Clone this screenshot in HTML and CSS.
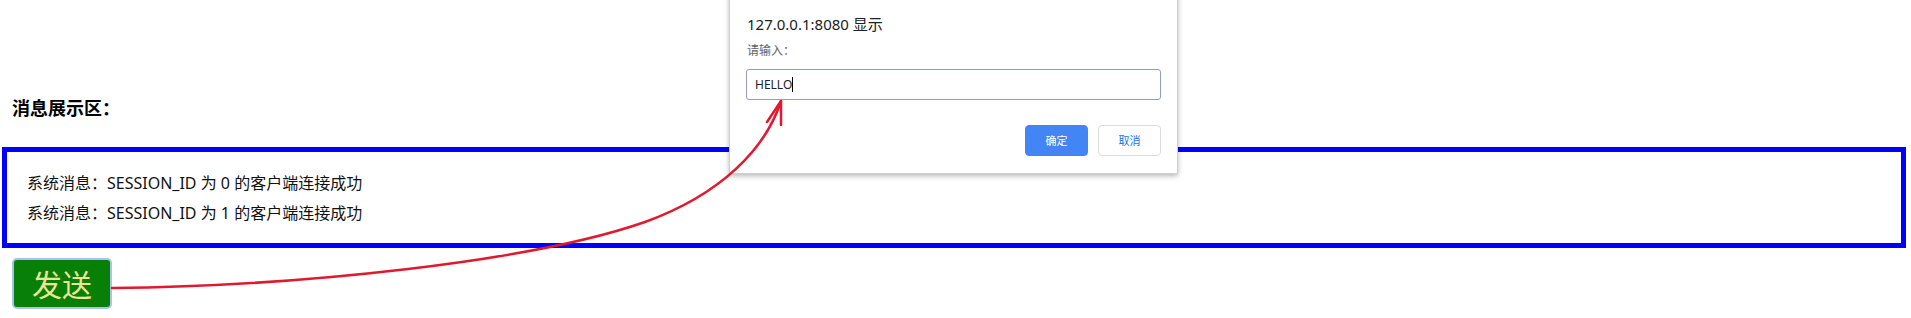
FILE: index.html
```html
<!DOCTYPE html>
<html lang="zh-CN">
<head>
    <meta charset="UTF-8">
    <title>WebSocket 聊天</title>
    <link rel="stylesheet" href="styles.css">
</head>
<body>
    <div class="page">
        <h3 class="title">消息展示区：</h3>

        <!-- zone des messages -->
        <div class="msg-box" id="msg-box">
            <div class="msg">系统消息：SESSION_ID 为 0 的客户端连接成功</div>
            <div class="msg">系统消息：SESSION_ID 为 1 的客户端连接成功</div>
        </div>

        <button class="send-btn" id="send-btn">发送</button>
    </div>

    <!-- boîte de dialogue prompt() -->
    <div class="dialog">
        <div class="dialog-title">127.0.0.1:8080 显示</div>
        <div class="dialog-label">请输入：</div>
        <div class="dialog-input">HELLO<span class="caret"></span></div>
        <div class="dialog-actions">
            <span class="btn btn-ok">确定</span>
            <span class="btn btn-cancel">取消</span>
        </div>
    </div>

    <!-- flèche rouge d'annotation -->
    <svg class="annotation" width="1911" height="318" viewBox="0 0 1911 318">
        <path d="M112 288 C300 286 530 262 645 222 C722 194 766 148 781 101" fill="none" stroke="#e0192f" stroke-width="2.5" stroke-linecap="round"/>
        <path d="M767 122 L781 101 L781 125" fill="none" stroke="#e0192f" stroke-width="2.5" stroke-linecap="round" stroke-linejoin="round"/>
    </svg>
</body>
</html>
```

FILE: styles.css
```css
body {
    margin: 0;
    background-color: white;
    font-family: "Noto Sans", "Noto Sans CJK SC", sans-serif;
    color: #111;
    position: relative;
    height: 318px;
    overflow: hidden;
}
.page {
    padding: 95px 5px 0 2px;
}
.title {
    margin: 0 0 0 10px;
    font-family: "Noto Sans CJK SC", sans-serif;
    font-size: 18px;
    line-height: 24px;
    font-weight: bold;
    color: #000;
}
.msg-box {
    margin-top: 28px;
    border: 5px solid #0000ff;
    padding: 16px 20px 15px 20px;
}
.msg {
    font-size: 16px;
    line-height: 30px;
    color: #111;
}
.send-btn {
    display: block;
    margin: 10px 0 0 10px;
    width: 100px;
    height: 51px;
    padding: 0;
    border: 2px solid #a8c1ef;
    border-radius: 5px;
    background-color: #088008;
    color: #ece595;
    font-family: "Noto Sans CJK SC", sans-serif;
    font-size: 30px;
    line-height: 45px;
}
.dialog {
    position: absolute;
    left: 729px;
    top: -10px;
    width: 449px;
    box-sizing: border-box;
    padding: 23px 16px 17px 16px;
    background-color: white;
    border: 1px solid #cfcfcf;
    box-shadow: 0 2px 5px rgba(0, 0, 0, 0.28);
    z-index: 5;
}
.dialog-title {
    font-size: 15px;
    line-height: 20px;
    color: #202124;
    margin-left: 1px;
}
.dialog-label {
    margin-top: 9px;
    margin-left: 1px;
    font-size: 12px;
    line-height: 16px;
    color: #5f6368;
}
.dialog-input {
    margin-top: 10px;
    height: 31px;
    box-sizing: border-box;
    border: 1px solid #93a0bd;
    border-radius: 3px;
    padding-left: 8px;
    font-size: 12px;
    line-height: 29px;
    color: #202124;
}
.caret {
    display: inline-block;
    width: 1px;
    height: 15px;
    background-color: #000;
    vertical-align: -3px;
}
.dialog-actions {
    margin-top: 25px;
    display: flex;
    justify-content: flex-end;
    gap: 10px;
}
.btn {
    width: 63px;
    height: 31px;
    box-sizing: border-box;
    border-radius: 4px;
    font-family: "Noto Sans CJK SC", sans-serif;
    font-size: 11px;
    line-height: 29px;
    text-align: center;
}
.btn-ok {
    background-color: #4285f4;
    border: 1px solid #4285f4;
    color: white;
}
.btn-cancel {
    background-color: white;
    border: 1px solid #dadce0;
    color: #1a73e8;
}
.annotation {
    position: absolute;
    left: 0;
    top: 0;
    z-index: 10;
    pointer-events: none;
}
```
